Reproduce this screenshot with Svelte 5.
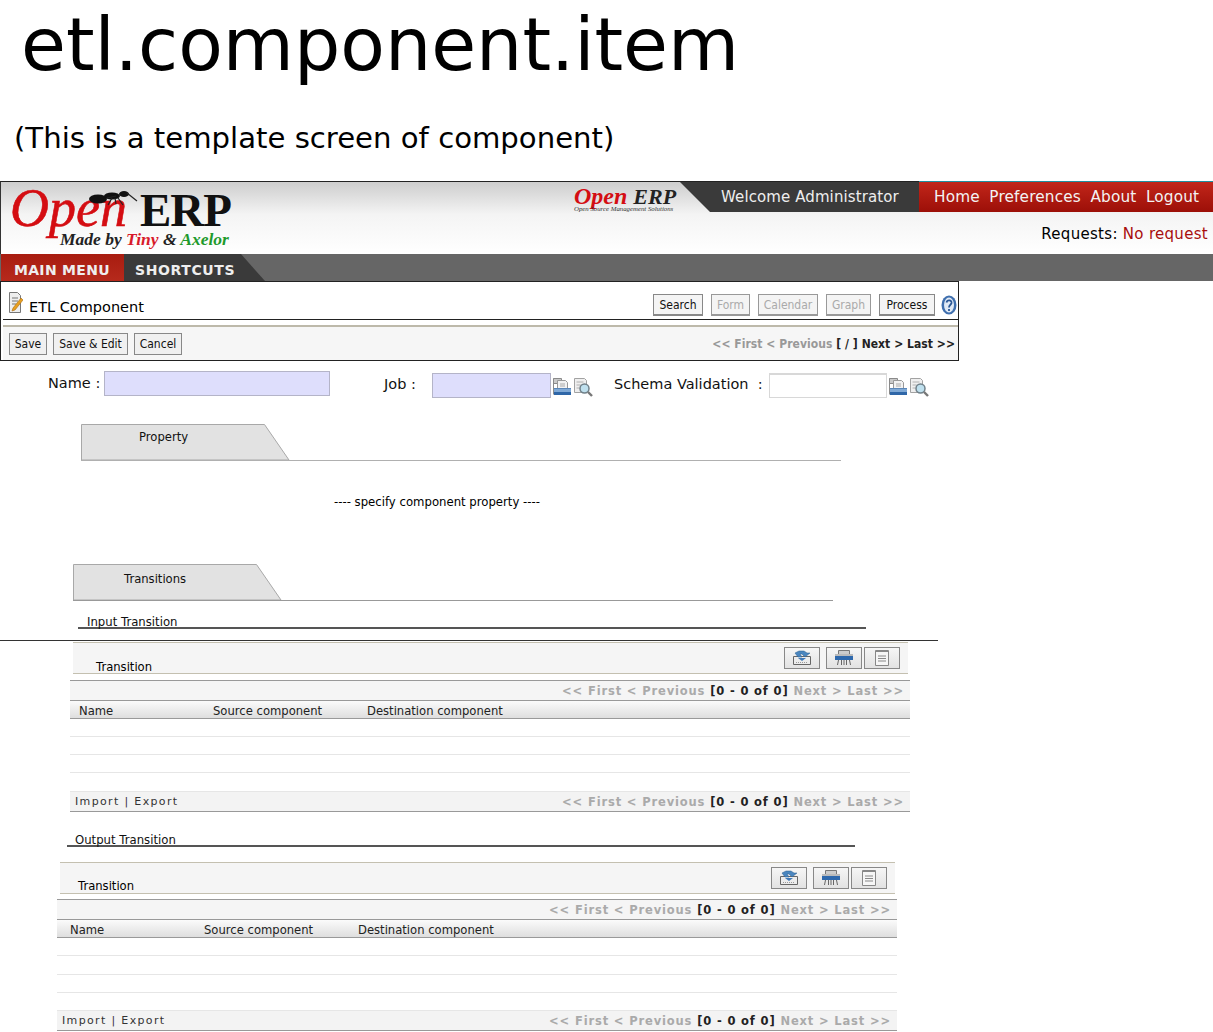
<script>
	const viewButtons = [
		{ label: 'Search', width: 50, on: true },
		{ label: 'Form', width: 39, on: false },
		{ label: 'Calendar', width: 60, on: false },
		{ label: 'Graph', width: 45, on: false },
		{ label: 'Process', width: 56, on: true }
	];
	const actionButtons = [
		{ label: 'Save', width: 38 },
		{ label: 'Save & Edit', width: 75 },
		{ label: 'Cancel', width: 48 }
	];
	const columns = [
		{ label: 'Name', width: 134 },
		{ label: 'Source component', width: 154 },
		{ label: 'Destination component', width: 200 }
	];
	const pager = { before: '<< First < Previous ', range: '[0 - 0 of 0]', after: ' Next > Last >>' };
</script>

{#snippet browseIcons()}
	<svg class="field-icon" width="20" height="20" viewBox="0 0 20 20" aria-hidden="true">
		<path d="M1.500 1.500h8v5h-8z" fill="#c9c9c9" stroke="#8a8a8a" />
		<path d="M5.500 3.500h8l2 2v6h-10z" fill="#f2f2f2" stroke="#999" />
		<path d="M8 7h5M8 9h5" stroke="#aaa" />
		<path d="M1.500 1.500v16" stroke="#8a8a8a" />
		<path d="M2 11h17v7H2z" fill="#7fa9d6" />
		<path d="M2 15h17v3H2z" fill="#2f67a8" />
		<path d="M2 11.500h17" stroke="#5a86b8" />
	</svg>
	<svg class="field-icon" width="20" height="20" viewBox="0 0 20 20" aria-hidden="true">
		<path d="M1.500 1.500h10l2 2v12h-12z" fill="#efefef" stroke="#a2a2a2" />
		<path d="M3.500 5h7M3.500 8h4M3.500 11h3" stroke="#b0b0b0" />
		<circle cx="11.500" cy="11.500" r="4.500" fill="#bfe0ee" stroke="#6f7f88" stroke-width="1.500" />
		<path d="M15 15l4 4" stroke="#777" stroke-width="2.400" />
	</svg>
{/snippet}

{#snippet tab(label, labelIndent)}
	<div class="tab-row">
		<div class="tab">
			<svg class="tab-shape" width="209" height="36" viewBox="0 0 209 36" aria-hidden="true">
				<path d="M0.5 36V0.5H183.5L208 36Z" fill="#e2e2e2" stroke="#a8a8a8" />
			</svg>
			<span class="tab-label" style="padding-left: {labelIndent}px">{label}</span>
		</div>
	</div>
{/snippet}

{#snippet pagerText()}
	<span class="pager-text">{pager.before}<b>{pager.range}</b>{pager.after}</span>
{/snippet}

{#snippet listPanel(rowHeights)}
	<div class="list-title">
		<span class="list-name">Transition</span>
		<div class="list-buttons">
			<button class="icon-btn" aria-label="Import">
				<svg width="20" height="16" viewBox="0 0 20 16">
					<path d="M1.500 6.500h17v8h-17z" fill="#ececec" stroke="#666" />
					<path d="M4 12.500h12" stroke="#999" stroke-dasharray="1 1" />
					<path d="M3 3l4-2h5l3 2h3l-5 4-3-3H8l2 3H6z" fill="#4a86bf" stroke="#2a5c8f" stroke-width=".5" />
					<path d="M6 8h8l-4 3z" fill="#3f79b8" />
				</svg>
			</button>
			<button class="icon-btn" aria-label="Print">
				<svg width="20" height="16" viewBox="0 0 20 16">
					<path d="M4.500 .5h11v4h-11z" fill="#ccc" stroke="#777" />
					<path d="M1 4h18v2H1z" fill="#bbb" />
					<path d="M1 6h18v4H1z" fill="#2f69ad" />
					<path d="M4.500 10l-1 5M7.500 10v5M10 10v5M12.500 10v5M15.500 10l1 5" stroke="#666" />
				</svg>
			</button>
			<button class="icon-btn last" aria-label="Details">
				<svg width="16" height="16" viewBox="0 0 16 16">
					<path d="M1.500 .5h13v15h-13z" fill="#f6f6f6" stroke="#888" />
					<path d="M1.500 1.500h13" stroke="#888" />
					<path d="M4 6h8M4 8.500h8M4 11h8" stroke="#888" />
				</svg>
			</button>
		</div>
	</div>
	<div class="list">
		<div class="pager-row">{@render pagerText()}</div>
		<div class="head-row">
			{#each columns as col}
				<span class="head-cell" style="width: {col.width}px">{col.label}</span>
			{/each}
		</div>
		{#each rowHeights as h}
			<div class="body-row" style="height: {h}px"></div>
		{/each}
		<div class="foot-row">
			<span class="import-export">Import | Export</span>
			{@render pagerText()}
		</div>
	</div>
{/snippet}

<h1>etl.component.item</h1>
<p class="intro">(This is a template screen of component)</p>

<div class="shot">
	<header class="app-head">
		<div class="logo">
			<div class="logo-main">
				<span class="logo-open">Open</span>
				<span class="logo-erp">ERP</span>
			</div>
			<div class="logo-tag">Made by <span class="tiny">Tiny</span> &amp; <span class="axelor">Axelor</span></div>
			<svg class="ant" width="52" height="16" viewBox="0 0 52 16" aria-hidden="true">
				<ellipse cx="10" cy="9" rx="9" ry="4.500" fill="#111" />
				<ellipse cx="24" cy="6" rx="8" ry="3.500" fill="#111" />
				<ellipse cx="36" cy="4" rx="5" ry="3" fill="#111" />
				<path d="M19 8l9-2M39 3l10 8M24 8l-4 7M30 8l5 7M27 8l1 6" fill="none" stroke="#222" stroke-width="1.200" />
			</svg>
		</div>
		<div class="head-right">
			<div class="head-top">
				<div class="mini-logo">
					<div class="mini-main"><span class="mini-open">Open</span><span class="mini-erp">ERP</span></div>
					<div class="mini-tag">Open Source Management Solutions</div>
				</div>
				<div class="welcome">Welcome Administrator</div>
				<nav class="head-links">
					<span>Home</span>
					<span>Preferences</span>
					<span>About</span>
					<span>Logout</span>
				</nav>
			</div>
			<div class="requests">Requests: <span class="no-req">No request</span></div>
		</div>
	</header>

	<div class="menu-bar">
		<div class="menu-main">MAIN MENU</div>
		<div class="menu-short">SHORTCUTS</div>
	</div>

	<section class="toolbar">
		<div class="title-row">
			<svg class="doc-icon" width="14" height="21" viewBox="0 0 14 21" aria-hidden="true">
				<path d="M.5 .5h8l3 3v17H.5z" fill="#eee" stroke="#777" />
				<path d="M3 6h6M3 9h6M3 12h4" stroke="#777" />
				<path d="M4 16l8-10 2 2-8 10-3 1z" fill="#e8a020" stroke="#a86a10" stroke-width=".6" />
			</svg>
			<span class="form-title">ETL Component</span>
			<div class="view-buttons">
				{#each viewButtons as b}
					<button class="btn" class:on={b.on} style="width: {b.width}px">{b.label}</button>
				{/each}
				<svg class="help" width="16" height="20" viewBox="0 0 16 20" aria-hidden="true">
					<ellipse cx="8" cy="10" rx="7.500" ry="9.500" fill="#3f6fae" />
					<ellipse cx="8" cy="10" rx="5" ry="7.500" fill="#dfe9f5" />
					<path d="M5.500 7.500C6 4.500 11 4.500 10.500 8c-.3 1.800-2.500 2-2.500 4.500M8 14v2" fill="none" stroke="#2a5795" stroke-width="1.800" />
				</svg>
			</div>
		</div>
		<div class="action-row">
			{#each actionButtons as b}
				<button class="btn on plain" style="width: {b.width}px">{b.label}</button>
			{/each}
			<span class="form-pager"><span class="dim">&lt;&lt; First &lt; Previous</span> [ / ] Next &gt; Last &gt;&gt;</span>
		</div>
	</section>

	<div class="fields">
		<label class="name-label" for="f-name">Name :</label>
		<input id="f-name" class="req name-input" />
		<label class="job-label" for="f-job">Job :</label>
		<input id="f-job" class="req job-input" />
		<div class="icons">{@render browseIcons()}</div>
		<label class="schema-label" for="f-schema">Schema Validation &nbsp;:</label>
		<input id="f-schema" class="schema-input" />
		<div class="icons">{@render browseIcons()}</div>
	</div>

	<div class="group first">
		{@render tab('Property', 58)}
	</div>
	<p class="placeholder">---- specify component property ----</p>

	<div class="group second">
		{@render tab('Transitions', 51)}
	</div>

	<div class="sub-title input-title"><span>Input Transition</span></div>
	<div class="full-rule"></div>
	<div class="panel input-panel">
		{@render listPanel([18, 18, 18, 19])}
	</div>

	<div class="sub-title output-title"><span>Output Transition</span></div>
	<div class="panel output-panel">
		{@render listPanel([18, 19, 18, 18])}
	</div>
</div>

<style>
	:global(body) {
		background: #fff;
		overflow: hidden;
		font-family: 'DejaVu Sans', sans-serif;
		color: #000;
	}

	h1 {
		margin: 0;
		padding: 0 0 0 21px;
		height: 100px;
		font-size: 73px;
		line-height: 90px;
		font-weight: 400;
	}

	.intro {
		margin: 0;
		padding-left: 14px;
		height: 81px;
		font-size: 29.150px;
		line-height: 76px;
	}

	.shot {
		width: 1213px;
		height: 851px;
		overflow: hidden;
	}

	/* top header */
	.app-head {
		box-sizing: border-box;
		display: flex;
		justify-content: space-between;
		height: 73px;
		border-top: 1px solid #222;
		border-left: 1px solid #333;
		background: linear-gradient(#cdcdcd, #f4f4f4 45%, #fff);
	}

	.logo {
		position: relative;
		padding: 3px 0 0 9px;
		font-family: 'Liberation Serif', serif;
		width: 300px;
	}

	.ant {
		position: absolute;
		left: 87px;
		top: 8px;
	}

	.logo-main {
		display: flex;
		align-items: baseline;
		height: 46px;
		line-height: 46px;
	}

	.logo-open {
		width: 130px;
		color: #d40d12;
		font-style: italic;
		font-size: 54px;
		-webkit-text-stroke: 0.6px #d40d12;
	}

	.logo-erp {
		font-weight: 700;
		font-size: 47px;
		color: #111;
		letter-spacing: -1px;
	}

	.logo-tag {
		padding: 0 0 0 50px;
		font-size: 17.500px;
		line-height: 16px;
		font-weight: 700;
		font-style: italic;
		color: #222;
		white-space: nowrap;
	}

	.tiny {
		color: #d81a2a;
	}

	.axelor {
		color: #1f9a2c;
	}

	.head-right {
		width: 639px;
	}

	.head-top {
		display: flex;
		height: 30px;
	}

	.mini-logo {
		width: 106px;
		padding-top: 2px;
		font-family: 'Liberation Serif', serif;
		line-height: 1;
	}

	.mini-main {
		height: 22px;
		white-space: nowrap;
	}

	.mini-open {
		color: #d40d12;
		font-style: italic;
		font-weight: 700;
		font-size: 24px;
	}

	.mini-erp {
		margin-left: 6px;
		font-style: italic;
		font-weight: 700;
		font-size: 22px;
		color: #222;
	}

	.mini-tag {
		font-size: 6.800px;
		font-style: italic;
		white-space: nowrap;
		color: #333;
	}

	.welcome {
		box-sizing: border-box;
		width: 239px;
		padding-left: 41px;
		background: #3a3a3a;
		clip-path: polygon(0 0, 100% 0, 100% 100%, 30px 100%);
		color: #eee;
		font-size: 15px;
		line-height: 30px;
		letter-spacing: 0.1px;
		white-space: nowrap;
	}

	.head-links {
		flex: 1;
		display: flex;
		gap: 9.500px;
		padding-left: 15px;
		background: linear-gradient(#c2261a, #9c0f08);
		box-shadow: 0 -1px 0 #1f8f9f;
		color: #f3f3f3;
		font-size: 15.300px;
		letter-spacing: 0.150px;
		line-height: 30px;
		white-space: nowrap;
	}

	.requests {
		padding: 12px 5px 0 0;
		text-align: right;
		font-size: 15px;
		line-height: 20px;
		letter-spacing: 0.3px;
	}

	.no-req {
		color: #a80d0d;
	}

	/* menu */
	.menu-bar {
		display: flex;
		height: 27px;
		background: #666;
		font-size: 14px;
		font-weight: 700;
		line-height: 33px;
		color: #eee;
	}

	.menu-main {
		box-sizing: border-box;
		width: 123px;
		margin-left: 1px;
		padding-left: 13px;
		background: linear-gradient(#a81c10, #b62a1c);
		letter-spacing: 0.3px;
		white-space: nowrap;
		overflow: hidden;
	}

	.menu-short {
		box-sizing: border-box;
		width: 141px;
		padding-left: 11px;
		background: #3a3a3a;
		clip-path: polygon(0 0, 117px 0, 100% 100%, 0 100%);
		letter-spacing: 0.6px;
		white-space: nowrap;
	}

	/* toolbar */
	.toolbar {
		box-sizing: border-box;
		width: 959px;
		height: 80px;
		border: 1px solid #222;
		background: #fff;
	}

	.title-row {
		display: flex;
		align-items: flex-end;
		height: 37px;
		margin-left: 2px;
		border-bottom: 1px solid #222;
	}

	.doc-icon {
		margin: 0 0 6px 6px;
	}

	.form-title {
		margin: 0 0 3px 6px;
		font-size: 14.500px;
		line-height: 18px;
		flex: 1;
	}

	.view-buttons {
		display: flex;
		align-items: center;
		gap: 8px;
		margin-bottom: 3px;
		padding-right: 1px;
	}

	.help {
		margin-left: -2px;
	}

	.btn {
		box-sizing: border-box;
		height: 22px;
		padding: 0;
		border: 1px solid #999;
		border-bottom-width: 2px;
		background: #f4f4f4;
		color: #aaa;
		font-family: 'DejaVu Sans', sans-serif;
		font-stretch: condensed;
		font-size: 12px;
		line-height: 18px;
		white-space: nowrap;
	}

	.btn.on {
		color: #111;
		border-color: #888;
	}

	.btn.plain {
		border-bottom-width: 1px;
		background: #f0f0f0;
	}

	.action-row {
		display: flex;
		align-items: center;
		gap: 6px;
		height: 35px;
		margin: 5px 0 0 2px;
		padding: 0 3px 0 6px;
		box-sizing: border-box;
		border-top: 2px solid #bdb9aa;
		background: #f6f6f6;
	}

	.form-pager {
		margin-left: auto;
		font-stretch: condensed;
		font-size: 12px;
		font-weight: 700;
		letter-spacing: 0.05px;
		color: #222;
		white-space: nowrap;
	}

	.dim {
		color: #999;
	}

	/* form fields */
	.fields {
		display: flex;
		align-items: flex-start;
		height: 63px;
		font-size: 14.500px;
		line-height: 18px;
		color: #111;
	}

	label {
		white-space: nowrap;
	}

	input {
		box-sizing: border-box;
		margin: 0;
		padding: 0;
		border: 1px solid #b4b4c8;
		background: #dedefc;
	}

	.name-label {
		width: 56px;
		margin: 13px 0 0 48px;
	}

	.name-input {
		width: 226px;
		height: 25px;
		margin-top: 10px;
	}

	.job-label {
		width: 48px;
		margin: 14px 0 0 54px;
	}

	.job-input {
		width: 119px;
		height: 25px;
		margin-top: 12px;
	}

	.icons {
		display: flex;
		gap: 1px;
		margin: 16px 0 0 1px;
		width: 41px;
	}

	.schema-label {
		width: 155px;
		margin: 14px 0 0 21px;
	}

	.schema-input {
		width: 118px;
		height: 25px;
		margin-top: 12px;
		background: #fff;
		border-color: #d8d8d8;
		border-width: 2px 1px 1px 1px;
	}

	/* tabs */
	.group {
		width: 760px;
	}

	.first {
		margin-left: 81px;
	}

	.second {
		margin-left: 73px;
	}

	.tab-row {
		height: 36px;
		border-bottom: 1px solid #b0b0b0;
	}

	.tab {
		position: relative;
		width: 209px;
		height: 36px;
	}

	.tab-shape {
		position: absolute;
		left: 0;
		top: 0;
	}

	.tab-label {
		position: relative;
		display: block;
		padding-top: 6px;
		font-size: 11.600px;
		line-height: 14px;
		color: #111;
	}

	.second .tab-label {
		padding-top: 8px;
	}

	.second .tab-row {
		border-bottom-color: #999;
	}

	.placeholder {
		margin: 0;
		height: 103px;
		padding: 34px 0 0 334px;
		box-sizing: border-box;
		font-size: 11.700px;
		line-height: 14px;
	}

	.sub-title {
		box-sizing: border-box;
		width: 788px;
		border-bottom: 2px solid #555;
		font-size: 11.700px;
		line-height: 14px;
		color: #111;
	}

	.input-title {
		height: 28px;
		margin-left: 78px;
		padding: 14px 0 0 9px;
	}

	.full-rule {
		width: 938px;
		height: 0;
		margin-top: 11px;
		border-top: 1px solid #333;
	}

	.input-panel {
		margin: 1px 0 0 70px;
	}

	.input-panel .list-name {
		position: relative;
		top: 1px;
	}

	.output-title {
		height: 26px;
		margin: 9px 0 0 67px;
		padding: 12px 0 0 8px;
	}

	.output-panel {
		margin: 15px 0 0 57px;
	}

	.output-panel .list-name {
		padding-left: 18px;
	}

	.output-panel .list {
		margin-top: 5px;
	}

	.output-panel .head-row {
		padding-left: 13px;
	}

	/* list panels */
	.panel {
		width: 840px;
		font-size: 11.600px;
	}

	.list-title {
		box-sizing: border-box;
		display: flex;
		justify-content: space-between;
		height: 32px;
		margin: 0 2px 0 3px;
		border-top: 1px solid #c4c0b0;
		border-bottom: 1px solid #c4c0b0;
		background: #f5f5f5;
	}

	.list-name {
		align-self: flex-end;
		padding-left: 23px;
		line-height: 14px;
	}

	.list-buttons {
		display: flex;
		gap: 6px;
		padding: 4px 8px 0 0;
	}

	.icon-btn {
		display: flex;
		align-items: center;
		justify-content: center;
		box-sizing: border-box;
		width: 36px;
		height: 22px;
		padding: 0;
		border: 1px solid #888;
		background: linear-gradient(#f6f6f6, #e2e2e2);
	}

	.icon-btn.last {
		margin-left: -4px;
	}

	.list {
		margin-top: 6px;
	}

	.pager-row {
		box-sizing: border-box;
		display: flex;
		justify-content: flex-end;
		align-items: center;
		height: 20px;
		padding-right: 6px;
		border-top: 1px solid #999;
		background: #f5f5f5;
	}

	.pager-text {
		font-size: 11.500px;
		font-weight: 700;
		letter-spacing: 0.850px;
		color: #aaa;
		white-space: pre;
	}

	.pager-text b {
		color: #222;
	}

	.head-row {
		box-sizing: border-box;
		display: flex;
		height: 19px;
		padding-left: 9px;
		border-top: 1px solid #999;
		border-bottom: 1px solid #999;
		background: linear-gradient(#fbfbfb, #dedede);
		line-height: 20px;
		color: #222;
	}

	.head-cell {
		white-space: nowrap;
	}

	.body-row {
		box-sizing: border-box;
		border-bottom: 1px solid #e6e6e6;
	}

	.foot-row {
		box-sizing: border-box;
		display: flex;
		justify-content: space-between;
		align-items: center;
		height: 20px;
		padding: 0 6px 0 5px;
		border-bottom: 1px solid #999;
		background: #f3f3f3;
	}

	.import-export {
		font-size: 11px;
		letter-spacing: 1.350px;
		color: #333;
		white-space: nowrap;
	}
</style>
